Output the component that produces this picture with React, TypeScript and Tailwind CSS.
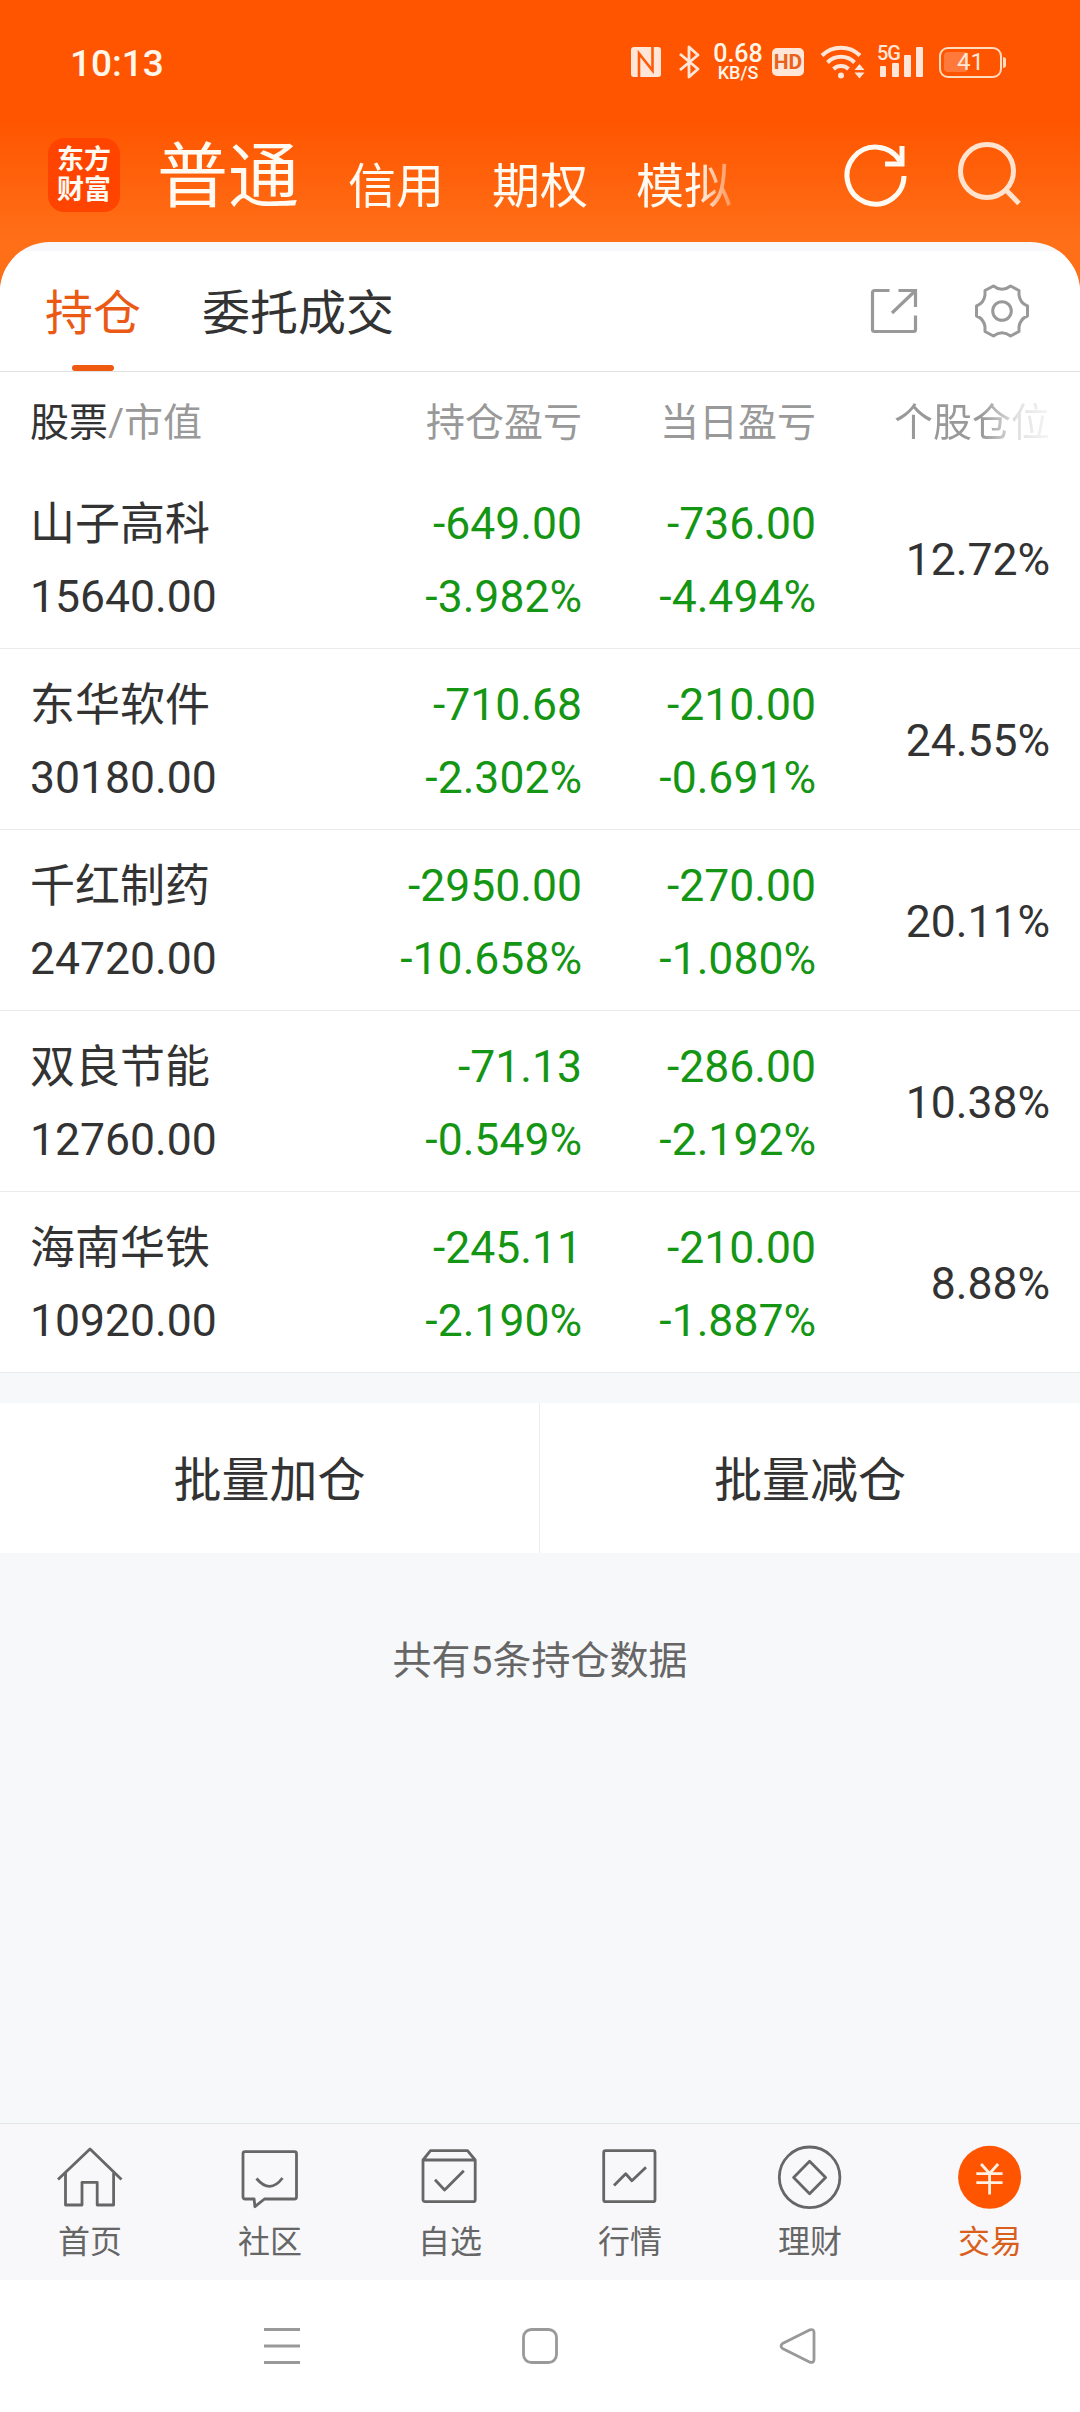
import type { ReactNode } from "react";

interface Holding {
  name: string;
  value: string;
  profit: string;
  profitRate: string;
  dayProfit: string;
  dayRate: string;
  position: string;
}

const holdings: Holding[] = [
  { name: "山子高科", value: "15640.00", profit: "-649.00", profitRate: "-3.982%", dayProfit: "-736.00", dayRate: "-4.494%", position: "12.72%" },
  { name: "东华软件", value: "30180.00", profit: "-710.68", profitRate: "-2.302%", dayProfit: "-210.00", dayRate: "-0.691%", position: "24.55%" },
  { name: "千红制药", value: "24720.00", profit: "-2950.00", profitRate: "-10.658%", dayProfit: "-270.00", dayRate: "-1.080%", position: "20.11%" },
  { name: "双良节能", value: "12760.00", profit: "-71.13", profitRate: "-0.549%", dayProfit: "-286.00", dayRate: "-2.192%", position: "10.38%" },
  { name: "海南华铁", value: "10920.00", profit: "-245.11", profitRate: "-2.190%", dayProfit: "-210.00", dayRate: "-1.887%", position: "8.88%" },
];

const StatusBar = () => (
  <div className="flex h-[124px] items-center pl-[70px] pr-[74px] text-[#ffe6d8]">
    <span className="pt-[2px] text-[37px] font-medium leading-none text-[#fff6ec]">10:13</span>
    <div className="ml-auto flex items-center">
      <svg width="30" height="30" viewBox="0 0 30 30">
        <rect width="30" height="30" rx="3" fill="currentColor" />
        <path d="M8 30V6.500L21.500 23.500V0" fill="none" stroke="#ff5a0a" strokeWidth="2.600" />
      </svg>
      <svg className="ml-[17px]" width="24" height="36" viewBox="0 0 24 36" fill="none" stroke="currentColor" strokeWidth="2.800">
        <path d="M2 10l18 15-9 8V3l9 8L2 26" strokeLinejoin="round" />
      </svg>
      <div className="ml-[10px] flex w-[52px] flex-col items-center text-[#fff6ec]">
        <span className="text-[25px] font-medium leading-[20px]">0.68</span>
        <span className="text-[18px] font-medium leading-[17px]">KB/S</span>
      </div>
      <span className="ml-[8px] flex h-7 w-8 items-center justify-center rounded-[5px] bg-[#ffe6d8] text-[21px] font-bold leading-none text-[#e8621c]">
        HD
      </span>
      <svg className="ml-[16px]" width="46" height="36" viewBox="0 0 46 36" fill="none" stroke="currentColor" strokeWidth="4">
        <path d="M2 11.500a27 27 0 0 1 38 0M7.500 18.500a19 19 0 0 1 27 0M13.500 25a11 11 0 0 1 15 0" />
        <circle cx="21" cy="31.500" r="3" fill="currentColor" stroke="none" />
        <path d="M34.500 26l5-6 5 6zM34.500 28.500l5 6 5-6z" fill="currentColor" stroke="none" />
      </svg>
      <div className="relative ml-[11px] h-8 w-[47px]">
        <span className="absolute -top-[3px] left-0 text-[20px] font-medium leading-none tracking-[-1px]">5G</span>
        <svg width="47" height="32" viewBox="0 0 47 32" fill="currentColor">
          <rect x="3" y="20" width="6" height="11" rx="1" />
          <rect x="15" y="17" width="7" height="14" rx="1" />
          <rect x="27" y="9" width="7" height="22" rx="1" />
          <rect x="39" y="1" width="7" height="30" rx="1" />
        </svg>
      </div>
      <div className="relative ml-[15px] flex h-[31px] w-[63px] items-center justify-center rounded-[9px] border-[2.500px] border-[#ffdcc0]">
        <span className="absolute left-[3px] top-[3px] h-5 w-6 rounded-[4px] bg-[#ff7a3a]" />
        <span className="relative text-[24px] leading-none">41</span>
      </div>
      <span className="ml-px h-[11px] w-[3px] rounded-r bg-[#ffdcc0]" />
    </div>
  </div>
);

const MarketHeader = () => (
  <div className="flex h-[118px] pl-12 text-[#fffaf2]">
    <div className="mt-[14px] flex h-[74px] w-[72px] flex-col items-center justify-center rounded-[16px] bg-[#ff4400] text-[27px] font-bold leading-[30px]">
      <span>东方</span>
      <span>财富</span>
    </div>
    <div className="ml-[37px] flex h-[110px] w-[600px] items-start overflow-hidden whitespace-nowrap text-[48px] leading-[90px] [mask-image:linear-gradient(to_right,#000_540px,transparent_590px)]">
      <span className="w-[191px] pt-[8px] text-[71px]">普通</span>
      <span className="w-[144px] pt-[18px]">信用</span>
      <span className="w-[144px] pt-[18px]">期权</span>
      <span className="pt-[18px]">模拟</span>
    </div>
    <svg className="ml-[83px] mt-4" width="72" height="72" viewBox="0 0 72 72" fill="none" stroke="currentColor" strokeWidth="5">
      <path d="M64 36A28.500 28.500 0 1 1 60 21" />
      <path d="M62 6v18H45" />
    </svg>
    <svg className="ml-[42px] mt-4 text-[#ffe3cf]" width="72" height="72" viewBox="0 0 72 72" fill="none" stroke="currentColor" strokeWidth="5">
      <circle cx="33" cy="31" r="26.500" />
      <path d="M52 50l13 13.500" />
    </svg>
  </div>
);

const ShareIcon = () => (
  <svg width="48" height="48" viewBox="0 0 48 48" fill="none" stroke="#999" strokeWidth="3.200">
    <path d="M19.500 3.500H4.500a2 2 0 0 0-2 2v37a2 2 0 0 0 2 2h39a2 2 0 0 0 2-2V28.500" />
    <path d="M28.500 3.500h17v16.500M45 4L22 26" />
  </svg>
);

const GearIcon = () => (
  <svg width="56" height="56" viewBox="-28 -28 56 56" fill="none" stroke="#999" strokeWidth="3" strokeLinejoin="round">
    <path d="M-8.600-25Q0-18.500 8.600-25L17-20.500V-16Q18-8 25.500-5V5Q18 8 17 16V20.500L8.600 25Q0 18.500-8.600 25L-17 20.500V16Q-18 8-25.500 5V-5Q-18-8-17-16V-20.500Z" />
    <circle r="9.300" />
  </svg>
);

const HoldingTabs = () => (
  <div className="flex h-[121px] items-center border-b border-[#e2e2e2] pr-[50px] text-[48px]">
    <div className="relative ml-[45px] flex h-full items-center pt-[6px] text-[#ea5a14]">
      持仓
      <span className="absolute bottom-0 left-[27px] h-[6px] w-[42px] rounded-full bg-[#f05a10]" />
    </div>
    <span className="ml-[61px] pt-[6px] text-[#333]">委托成交</span>
    <div className="ml-auto flex items-center gap-[56px]">
      <ShareIcon />
      <GearIcon />
    </div>
  </div>
);

const HoldingRow = ({ item }: { item: Holding }) => (
  <div className="grid h-[181px] grid-cols-[300px_252px_234px_234px] items-center border-b border-[#ebebeb] pl-[30px] text-[44.5px] leading-[73px] text-[#333]">
    <div className="pt-[3px]">
      <div className="pt-[2px] text-[45px] leading-[72px]">{item.name}</div>
      <div className="leading-[72px]">{item.value}</div>
    </div>
    <div className="pt-[5px] text-right text-[#149614]">
      <div>{item.profit}</div>
      <div>{item.profitRate}</div>
    </div>
    <div className="pt-[5px] text-right text-[#149614]">
      <div>{item.dayProfit}</div>
      <div>{item.dayRate}</div>
    </div>
    <div className="pt-[5px] text-right">{item.position}</div>
  </div>
);

const HoldingTable = () => (
  <div className="bg-white">
    <div className="grid h-[96px] grid-cols-[300px_252px_234px_234px] items-center pl-[30px] pt-[6px] text-[39px] text-[#999]">
      <div>
        <span className="text-[#333]">股票</span>/市值
      </div>
      <div className="text-right">持仓盈亏</div>
      <div className="text-right">当日盈亏</div>
      <div className="text-right [mask-image:linear-gradient(to_right,#000_165px,rgba(0,0,0,0.3)_200px,rgba(0,0,0,0.1)_233px)]">个股仓位</div>
    </div>
    {holdings.map((item) => (
      <HoldingRow key={item.name} item={item} />
    ))}
  </div>
);

const TabItem = ({ label, active, children }: { label: string; active?: boolean; children: ReactNode }) => (
  <div className={active ? "flex flex-1 flex-col items-center text-[#d9601c]" : "flex flex-1 flex-col items-center text-[#666]"}>
    <svg className="mt-[17px]" width="72" height="72" viewBox="0 0 72 72" fill="none" stroke="currentColor" strokeWidth="2.800" strokeLinejoin="round">
      {children}
    </svg>
    <span className="mt-[7px] text-[32px] leading-[44px]">{label}</span>
  </div>
);

const TabBar = () => (
  <div className="flex h-[157px] border-t border-[#e3e4e6] bg-[#f8f8fb]">
    <TabItem label="首页">
      <path d="M4 38.500L36 8l31.500 30.500" />
      <path d="M11.500 32v32H28V41.300h15.200V64h16.400V32" />
    </TabItem>
    <TabItem label="社区">
      <path d="M11 10.700h49.500a2 2 0 0 1 2 2V56a2 2 0 0 1-2 2h-30l-9.600 7.700-.8-7.700H11a2 2 0 0 1-2-2V12.700a2 2 0 0 1 2-2z" />
      <path d="M22.500 37.500q13.500 16 26-.5" />
    </TabItem>
    <TabItem label="自选">
      <path d="M9 19l7.500-9.300h37L61.200 19v39.700a2 2 0 0 1-2 2H11a2 2 0 0 1-2-2zM9 19h52.200" />
      <path d="M21 38.700L30.600 49l19.200-19.300" />
    </TabItem>
    <TabItem label="行情">
      <rect x="9.700" y="9.700" width="51.300" height="51" rx="2" />
      <path d="M20 44.500l11.700-11.800 6.200 7L52 26.300" />
    </TabItem>
    <TabItem label="理财">
      <circle cx="35.600" cy="36.300" r="30.300" />
      <path d="M35.600 20.300l16 16.200-16 16.200-16-16.200z" />
    </TabItem>
    <TabItem label="交易" active>
      <circle cx="35.600" cy="36.300" r="31.500" fill="#ff5500" stroke="none" />
      <path d="M27.100 23L35.600 32.500 44.100 23M35.600 32.500v21M22.300 32.700h26.300M22.300 41.700h26.300" stroke="#fff0e2" />
    </TabItem>
  </div>
);

const SystemNav = () => (
  <div className="flex h-[132px] items-center bg-white pl-[262px] text-[#999]">
    <svg width="40" height="40" viewBox="0 0 40 40" fill="none" stroke="currentColor" strokeWidth="3">
      <path d="M2 3.500h36M2 20h36M2 36.500h36" />
    </svg>
    <svg className="ml-[218px]" width="40" height="40" viewBox="0 0 40 40" fill="none" stroke="currentColor" strokeWidth="2.800">
      <rect x="3.500" y="3.500" width="33" height="33" rx="8" />
    </svg>
    <svg className="ml-[219px]" width="40" height="40" viewBox="0 0 40 40" fill="none" stroke="currentColor" strokeWidth="2.800" strokeLinejoin="round">
      <path d="M31 3.800L3.500 17.600q-3 2.400 0 4.800L31 36.200q3.800 1 4-2.500V6.300q-.2-3.500-4-2.500z" />
    </svg>
  </div>
);

const App = () => {
  return (
    <div className="flex h-[2412px] w-[1080px] flex-col overflow-hidden bg-[#f7f8fa] font-[Roboto,'Noto_Sans_CJK_SC',sans-serif]">
      <div className="h-[300px] shrink-0 bg-[linear-gradient(to_bottom,#ff5500_120px,#ff6f18_240px)]">
        <StatusBar />
        <MarketHeader />
      </div>
      <div className="-mt-[58px] shrink-0 overflow-hidden rounded-t-[50px] bg-[#f8f8fa] pt-[9px]">
        <div className="bg-white">
          <HoldingTabs />
          <HoldingTable />
        </div>
      </div>
      <div className="mt-[30px] flex h-[150px] shrink-0 bg-white text-[48px] text-[#333]">
        <div className="flex w-[540px] items-center justify-center border-r border-[#ececec] pt-[6px]">批量加仓</div>
        <div className="flex w-[540px] items-center justify-center pt-[6px]">批量减仓</div>
      </div>
      <div className="mt-[80px] text-center text-[39px] leading-[56px] text-[#666]">共有5条持仓数据</div>
      <div className="mt-auto">
        <TabBar />
        <SystemNav />
      </div>
    </div>
  );
};

export default App;
